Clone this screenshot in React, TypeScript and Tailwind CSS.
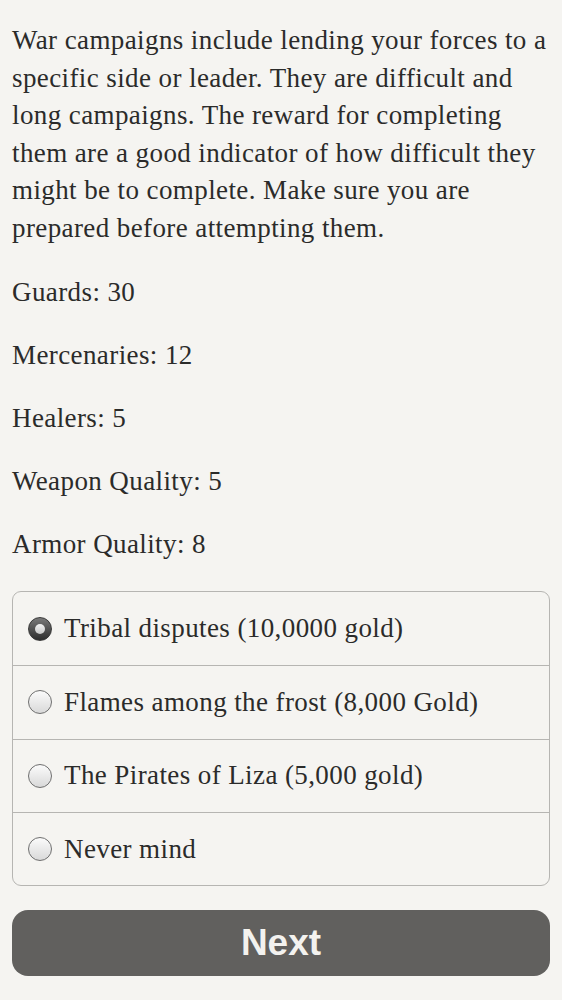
import React, { useState } from 'react';

const campaigns = [
  'Tribal disputes (10,0000 gold)',
  'Flames among the frost (8,000 Gold)',
  'The Pirates of Liza (5,000 gold)',
  'Never mind',
];

const stats = [
  ['Guards', 30],
  ['Mercenaries', 12],
  ['Healers', 5],
  ['Weapon Quality', 5],
  ['Armor Quality', 8],
];

const Radio: React.FC<{ checked: boolean }> = ({ checked }) =>
  checked ? (
    <span className="w-[24px] h-[24px] rounded-full flex items-center justify-center shrink-0 bg-gradient-to-b from-[#7a7a7a] to-[#2e2e2e] border border-[#3a3a3a]">
      <span className="w-[10px] h-[10px] rounded-full bg-gradient-to-b from-[#f2f2f2] to-[#c8c8c8]" />
    </span>
  ) : (
    <span className="w-[24px] h-[24px] rounded-full shrink-0 bg-gradient-to-b from-[#fbfbfb] to-[#d9d9d9] border border-[#6f6f6f]" />
  );

export default function App() {
  const [selected, setSelected] = useState(0);

  return (
    <div className="min-h-screen bg-[#f5f4f1] text-[#2b2b2a] px-[12px] pt-[22px] font-['Liberation_Serif',serif] text-[27px] tracking-[0.4px]">
      <p className="leading-[37.5px]">
        War campaigns include lending your forces to a specific side or leader. They are difficult and long
        campaigns. The reward for completing them are a good indicator of how difficult they might be to
        complete. Make sure you are prepared before attempting them.
      </p>

      <div className="mt-[27px] flex flex-col gap-[26px]">
        {stats.map(([label, value]) => (
          <p key={label} className="leading-[37px]">
            {label}: {value}
          </p>
        ))}
      </div>

      <div className="mt-[28px] border border-[#b6b5b2] rounded-[9px] overflow-hidden">
        {campaigns.map((c, i) => (
          <button
            key={c}
            onClick={() => setSelected(i)}
            className={`w-full h-[73.25px] flex items-center gap-[12px] px-[15px] text-left ${
              i > 0 ? 'border-t border-[#b6b5b2]' : ''
            }`}
          >
            <Radio checked={selected === i} />
            <span>{c}</span>
          </button>
        ))}
      </div>

      <button className="mt-[24px] w-full h-[66px] rounded-[16px] bg-[#61605e] text-[#f3f2ef] font-['Liberation_Sans',sans-serif] font-bold text-[37px] tracking-normal">
        Next
      </button>
    </div>
  );
}
